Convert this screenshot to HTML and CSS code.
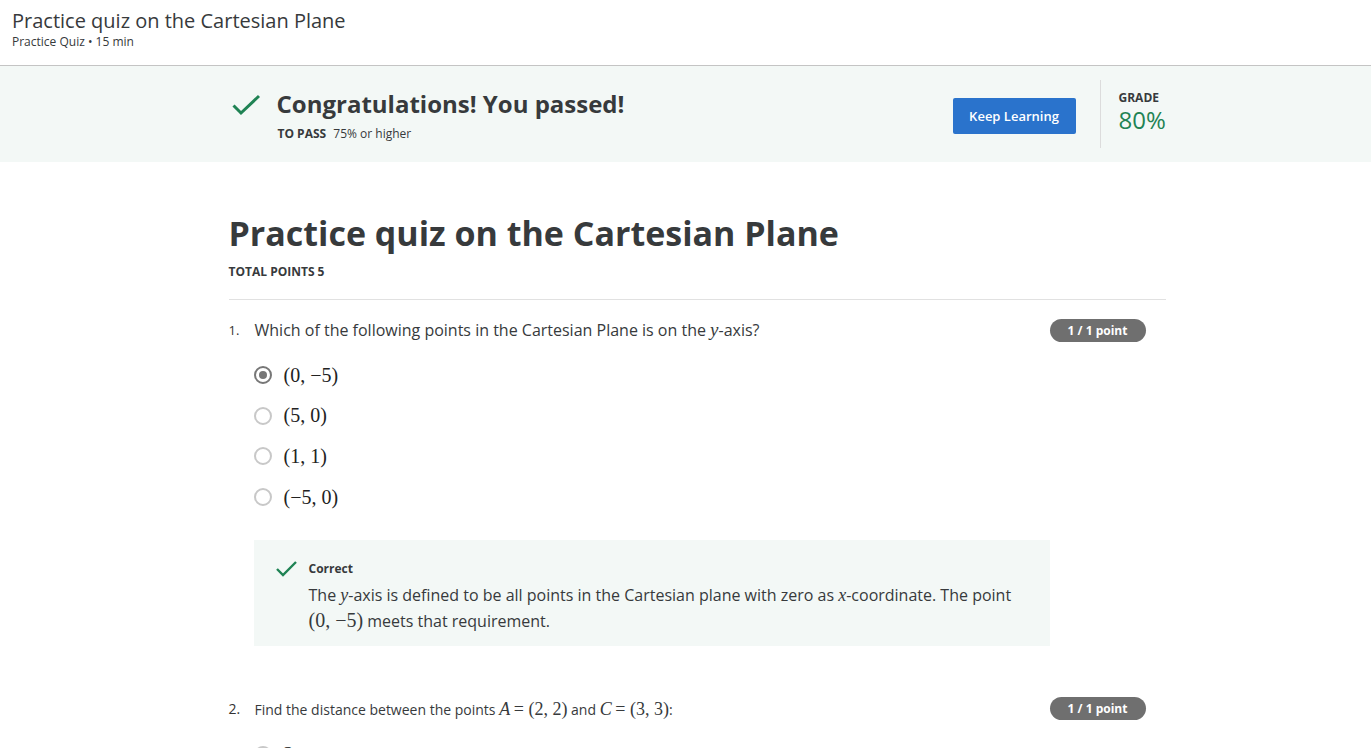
FILE: index.html
```html
<!DOCTYPE html>
<html>
<head>
<meta charset="utf-8">
<link rel="stylesheet" href="styles.css">
</head>
<body>
<header class="topbar">
  <div class="topbar-title">Practice quiz on the Cartesian Plane</div>
  <div class="topbar-sub">Practice Quiz • 15 min</div>
</header>
<section class="banner">
  <div class="banner-inner">
    <svg class="banner-check" width="32" height="24" viewBox="0 0 32 24"><path d="M2.5 12.5 L10 20 L28 3" fill="none" stroke="#1f8354" stroke-width="3"/></svg>
    <div class="banner-text">
      <div class="banner-title">Congratulations! You passed!</div>
      <div class="banner-pass"><b>TO PASS</b> 75% or higher</div>
    </div>
    <button class="btn">Keep Learning</button>
    <div class="grade">
      <div class="grade-label">GRADE</div>
      <div class="grade-value">80%</div>
    </div>
  </div>
</section>
<main class="content">
  <h1 class="quiz-title">Practice quiz on the Cartesian Plane</h1>
  <div class="total">TOTAL POINTS 5</div>
  <div class="q">
    <div class="q-head">
      <span class="q-num">1.</span>
      <span class="q-text">Which of the following points in the Cartesian Plane is on the <i class="m">y</i>-axis?</span>
      <span class="badge">1 / 1 point</span>
    </div>
    <div class="opts">
      <div class="opt"><span class="radio checked"></span><span class="m">(0, −5)</span></div>
      <div class="opt"><span class="radio"></span><span class="m">(5, 0)</span></div>
      <div class="opt"><span class="radio"></span><span class="m">(1, 1)</span></div>
      <div class="opt"><span class="radio"></span><span class="m">(−5, 0)</span></div>
    </div>
    <div class="feedback">
      <svg class="fb-check" width="24" height="20" viewBox="0 0 24 20"><path d="M2 10 L8 16 L21 3" fill="none" stroke="#1f8354" stroke-width="2.4"/></svg>
      <div class="fb-body">
        <div class="fb-title">Correct</div>
        <div class="fb-text">The <i class="m">y</i>-axis is defined to be all points in the Cartesian plane with zero as <i class="m">x</i>-coordinate. The point <span class="m m-lg">(0, −5)</span> meets that requirement.</div>
      </div>
    </div>
  </div>
  <div class="q q2">
    <div class="q-head">
      <span class="q-num q-num2">2.</span>
      <span class="q-text q-text2">Find the distance between the points <i class="m">A</i> <span class="m">= (2, 2)</span> and <i class="m">C</i> <span class="m">= (3, 3)</span>:</span>
      <span class="badge">1 / 1 point</span>
    </div>
    <div class="opts">
      <div class="opt"><span class="radio"></span><span class="m">2</span></div>
    </div>
  </div>
</main>
</body>
</html>
```

FILE: styles.css
```css
* { box-sizing: border-box; }
html, body { margin: 0; padding: 0; }
body {
  font-family: "Open Sans", "Liberation Sans", sans-serif;
  color: #333;
  background: #fff;
  overflow: hidden;
  height: 748px;
}
.topbar {
  height: 66px;
  padding: 7px 12px 0;
  border-bottom: 1px solid #c4c4c4;
}
.topbar-title {
  font-size: 20px;
  line-height: 28px;
  color: #373a3c;
}
.topbar-sub {
  font-size: 12px;
  line-height: 16px;
  color: #373a3c;
  margin-top: -1px;
}
.banner {
  background: #f3f8f6;
  height: 96px;
}
.banner-inner {
  width: 960px;
  margin: 0 auto;
  padding: 0 0 0 23px;
  display: flex;
  align-items: flex-start;
  height: 100%;
}
.banner-check {
  flex: none;
  display: block;
  margin: 27px 0 0 2px;
}
.banner-text {
  margin-left: 14px;
  padding-top: 21px;
  flex: 1;
}
.banner-title {
  font-size: 24px;
  font-weight: 700;
  line-height: 34px;
  color: #373a3c;
}
.banner-pass {
  font-size: 12px;
  line-height: 16px;
  margin-top: 5px;
  margin-left: 1px;
  color: #373a3c;
}
.banner-pass b { margin-right: 4px; }
.btn {
  flex: none;
  margin-top: 32px;
  width: 123px;
  height: 36px;
  background: #2a73cc;
  color: #fff;
  border: none;
  border-radius: 2px;
  font-family: "Open Sans", sans-serif;
  font-size: 13px;
  font-weight: 600;
  padding: 0;
}
.grade {
  flex: none;
  margin: 14px 0 0 24px;
  border-left: 1px solid #dcdcdc;
  height: 68px;
  padding: 10px 0 0 18px;
  width: 66px;
}
.grade-label {
  font-size: 12px;
  font-weight: 700;
  line-height: 15px;
  color: #373a3c;
}
.grade-value {
  font-size: 24px;
  line-height: 28px;
  margin-top: 1px;
  color: #1f8354;
  white-space: nowrap;
}
.content {
  width: 960px;
  margin: 0 auto;
  padding: 0 0 0 23px;
}
.quiz-title {
  margin: 0;
  padding-top: 46px;
  font-size: 34px;
  line-height: 50px;
  font-weight: 700;
  color: #373a3c;
}
.total {
  font-size: 12px;
  font-weight: 700;
  line-height: 16px;
  margin-top: 6px;
  padding-bottom: 19px;
  border-bottom: 1px solid #e1e1e1;
  color: #373a3c;
}
.q { padding-top: 19px; }
.q-head {
  display: flex;
  align-items: flex-start;
}
.q-num {
  width: 26px;
  font-size: 13px;
  line-height: 22px;
  flex: none;
}
.q-text {
  flex: 1;
  font-size: 16px;
  line-height: 22px;
  color: #373a3c;
}
.badge {
  flex: none;
  width: 96px;
  height: 23px;
  margin-right: 20px;
  border-radius: 12px;
  background: #6f6f6f;
  color: #fff;
  font-size: 12px;
  font-weight: 700;
  line-height: 23px;
  text-align: center;
}
.m {
  font-family: "Liberation Serif", "DejaVu Serif", serif;
  font-size: 19px;
}
i.m { font-style: italic; }
.opts {
  padding: 13px 0 0 25px;
}
.opt {
  display: flex;
  align-items: center;
  height: 40.6px;
  color: #222;
}
.opt .m { font-size: 20px; }
.radio {
  width: 18px;
  height: 18px;
  border: 2px solid #c8c8c8;
  border-radius: 50%;
  margin-right: 12px;
  flex: none;
  position: relative;
}
.radio.checked {
  border-color: #777;
}
.radio.checked::after {
  content: "";
  position: absolute;
  left: 3px;
  top: 3px;
  width: 8px;
  height: 8px;
  border-radius: 50%;
  background: #777;
}
.feedback {
  margin: 23px 116px 0 25px;
  background: #f3f8f6;
  display: flex;
  padding: 21px 20px 12px 21px;
}
.fb-check {
  flex: none;
  display: block;
  margin-top: -2px;
}
.fb-body {
  margin-left: 10px;
}
.fb-title {
  font-size: 12px;
  font-weight: 700;
  line-height: 16px;
  color: #373a3c;
}
.fb-text {
  font-size: 16px;
  line-height: 25px;
  margin-top: 6px;
  color: #373a3c;
}
.fb-text .m { font-size: 18px; }
.fb-text .m-lg { font-size: 20px; }
.q2 { padding-top: 51px; }
.q-num2 { font-size: 14px; line-height: 24px; }
.q-text2 { font-size: 14px; line-height: 24px; }
.q-text2 .m { font-size: 18px; }
.q2 .opts { padding-top: 12px; }
```
